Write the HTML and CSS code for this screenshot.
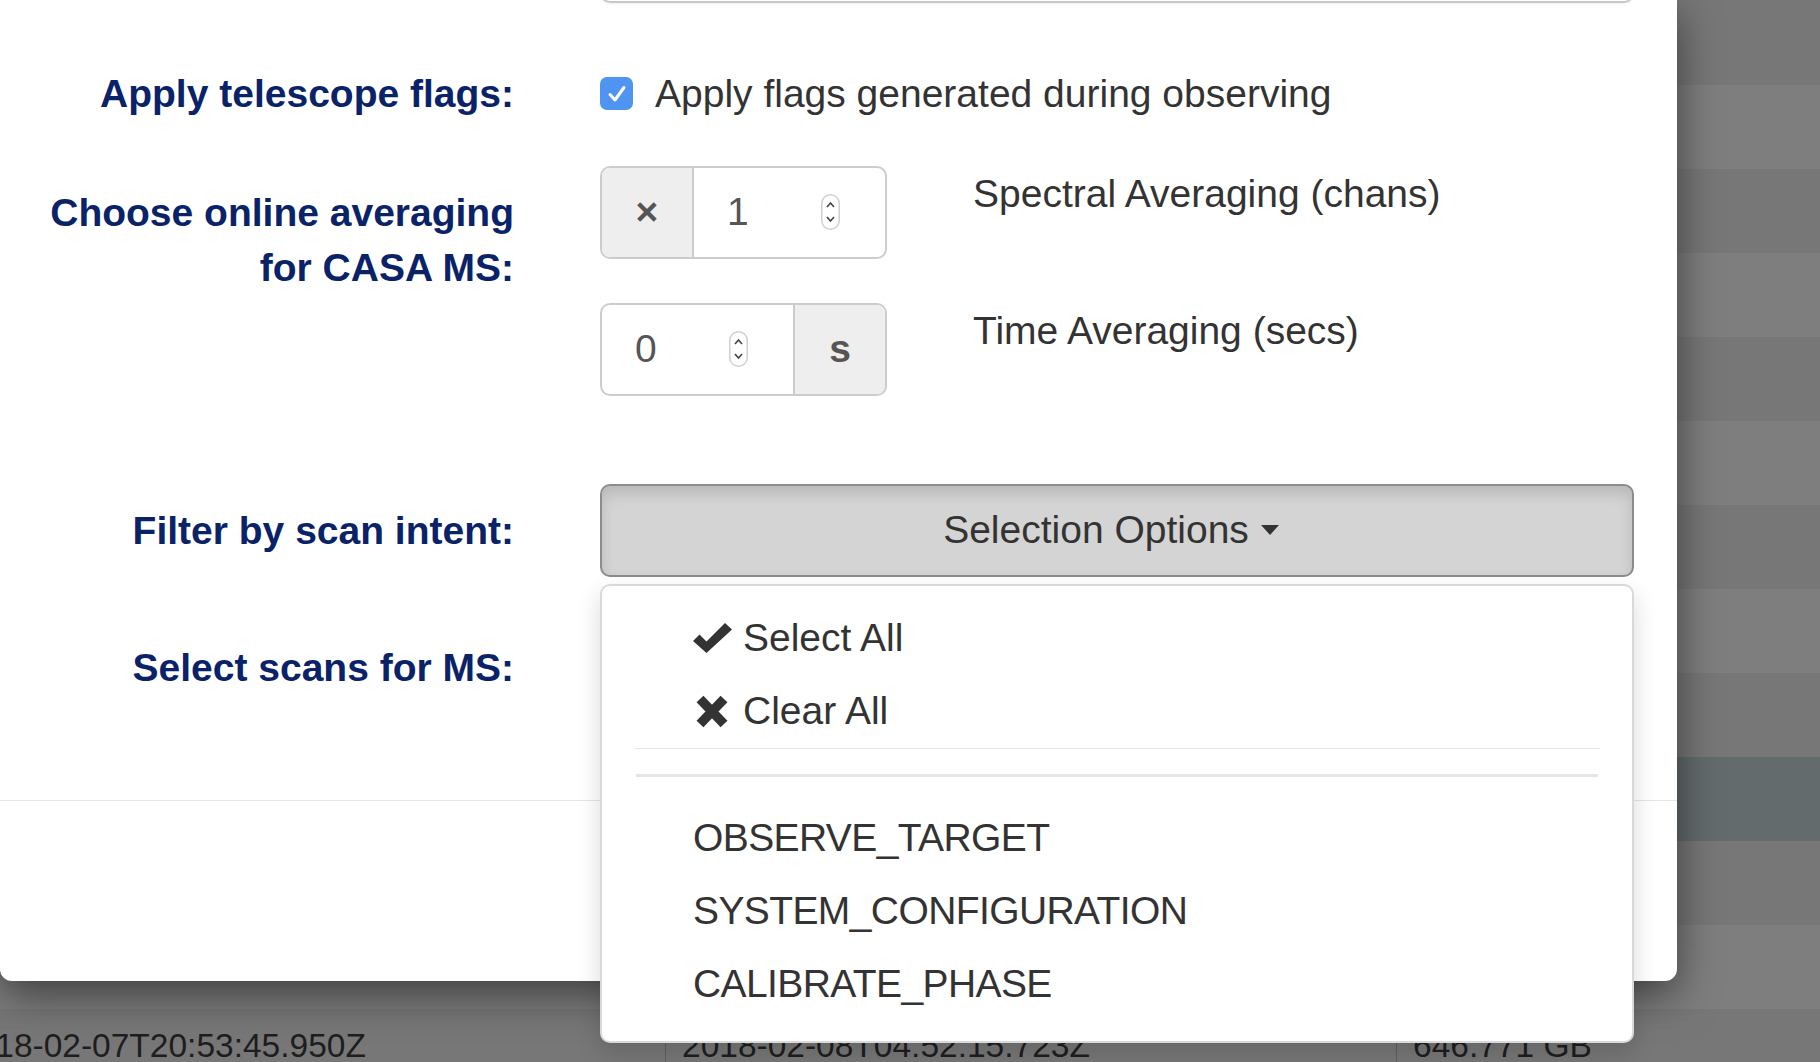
FILE: index.html
```html
<!DOCTYPE html>
<html lang="en">
<head>
<meta charset="utf-8">
<title>Export options</title>
<link rel="stylesheet" href="styles.css">
</head>
<body>
<div class="bg-table">
  <div class="bg-row first"></div>
  <div class="bg-row"></div>
  <div class="bg-row"></div>
  <div class="bg-row"></div>
  <div class="bg-row"></div>
  <div class="bg-row"></div>
  <div class="bg-row"></div>
  <div class="bg-row"></div>
  <div class="bg-row"></div>
  <div class="bg-row active"></div>
  <div class="bg-row"></div>
  <div class="bg-row"></div>
  <div class="bg-row data">
    <div class="cell">2018-02-07T20:53:45.950Z</div>
    <div class="cell">2018-02-08T04:52:15.723Z</div>
    <div class="cell">646.771 GB</div>
  </div>
</div>

<div class="modal">
  <div class="modal-body">
    <div class="form-group prev">
      <div></div>
      <div class="prev-input"></div>
    </div>

    <div class="form-group">
      <label class="control-label">Apply telescope flags:</label>
      <div class="checkbox">
        <span class="cb">
          <svg width="20" height="18" viewBox="0 0 20 18"><path d="M3 9.5 L8 15 L17 2.5" fill="none" stroke="#fff" stroke-width="3" stroke-linecap="round" stroke-linejoin="round"/></svg>
        </span>
        <span>Apply flags generated during observing</span>
      </div>
    </div>

    <div class="form-group">
      <label class="control-label">Choose online averaging<br>for CASA MS:</label>
      <div class="avg">
        <div class="avg-row">
          <div class="input-group">
            <span class="addon left">×</span>
            <span class="num">
              <span class="val">1</span>
              <svg class="spin" viewBox="0 0 19 36" width="19" height="36"><rect x="0.75" y="0.75" width="17.5" height="34.5" rx="8.75" fill="#fff" stroke="#cfcfcf" stroke-width="1.5"/><path d="M6 13 L9.5 9 L13 13" fill="none" stroke="#444" stroke-width="1.6"/><path d="M6 23 L9.5 27 L13 23" fill="none" stroke="#444" stroke-width="1.6"/></svg>
            </span>
          </div>
          <div class="avg-text">Spectral Averaging (chans)</div>
        </div>
        <div class="avg-row">
          <div class="input-group">
            <span class="num">
              <span class="val">0</span>
              <svg class="spin" viewBox="0 0 19 36" width="19" height="36"><rect x="0.75" y="0.75" width="17.5" height="34.5" rx="8.75" fill="#fff" stroke="#cfcfcf" stroke-width="1.5"/><path d="M6 13 L9.5 9 L13 13" fill="none" stroke="#444" stroke-width="1.6"/><path d="M6 23 L9.5 27 L13 23" fill="none" stroke="#444" stroke-width="1.6"/></svg>
            </span>
            <span class="addon right">s</span>
          </div>
          <div class="avg-text">Time Averaging (secs)</div>
        </div>
      </div>
    </div>

    <div class="form-group">
      <label class="control-label">Filter by scan intent:</label>
      <div class="btn-group">
        <button class="btn-select" type="button">Selection Options <span class="caret"></span></button>
        <ul class="dropdown-menu">
          <li class="menu-item">
            <span class="ico">
              <svg width="39" height="30" viewBox="0 0 39 30"><path d="M0 18 L6.5 11.5 L13.5 18.5 L32 0 L39 6.5 L13.5 30 Z" fill="#333"/></svg>
            </span>
            <span>Select All</span>
          </li>
          <li class="menu-item">
            <span class="ico">
              <svg width="39" height="33" viewBox="0 0 39 33"><path d="M7 4 L31 29 M31 4 L7 29" fill="none" stroke="#333" stroke-width="9.5"/></svg>
            </span>
            <span>Clear All</span>
          </li>
          <li class="sep-thin"></li>
          <li class="divider"></li>
          <li class="menu-item caps">OBSERVE_TARGET</li>
          <li class="menu-item caps">SYSTEM_CONFIGURATION</li>
          <li class="menu-item caps">CALIBRATE_PHASE</li>
        </ul>
      </div>
    </div>

    <div class="form-group">
      <label class="control-label">Select scans for MS:</label>
      <div></div>
    </div>
  </div>
  <div class="modal-footer"></div>
</div>
</body>
</html>
```

FILE: styles.css
```css
* {
  box-sizing: border-box;
}

html,
body {
  margin: 0;
  padding: 0;
}

body {
  width: 1820px;
  height: 1062px;
  overflow: hidden;
  position: relative;
  background: #777;
  font-family: "Liberation Sans", Arial, Helvetica, sans-serif;
  font-size: 39px;
  line-height: 1.4286;
  color: #333;
}

/* background table (behind the modal backdrop) */
.bg-row {
  height: 84px;
  background: #777777;
}

.bg-row:nth-child(even) {
  background: #7e7e7e;
}

.bg-row.first {
  height: 85px;
}

.bg-row.active {
  background: #636b6c;
}

.bg-row.data {
  display: grid;
  grid-template-columns: 665px 731px 1fr;
  font-size: 33.5px;
  color: #1e1e1e;
  white-space: nowrap;
}

.bg-row .cell {
  padding: 13px 16px 0;
  border-left: 1px solid rgba(0, 0, 0, 0.2);
}

.bg-row .cell:first-child {
  border-left: none;
  padding-left: 0;
  margin-left: -42px;
}

/* modal */
.modal {
  position: absolute;
  left: 0;
  top: 0;
  width: 1677px;
  height: 981px;
  background: #fff;
  border-radius: 0 0 12px 12px;
  box-shadow: 0 14px 42px rgba(0, 0, 0, 0.5);
  display: flex;
  flex-direction: column;
}

.modal-body {
  flex: 1;
  padding-right: 43px;
}

.modal-footer {
  height: 181px;
  border-top: 1px solid #e5e5e5;
}

.form-group {
  display: grid;
  grid-template-columns: 514px 1034px;
  column-gap: 86px;
  margin-bottom: 44px;
}

.prev-input {
  height: 14px;
  margin-top: -11px;
  border: 2px solid #c8c8c8;
  border-top: none;
  border-radius: 0 0 10px 10px;
  box-shadow: 0 1px 2px rgba(0, 0, 0, 0.08);
}

.control-label {
  text-align: right;
  font-weight: 700;
  color: #0a2368;
  padding-top: 19px;
}

.checkbox {
  padding-top: 19px;
  display: flex;
  align-items: center;
  gap: 22px;
}

.cb {
  width: 33px;
  height: 33px;
  border-radius: 7px;
  background: #4f94f0;
  display: flex;
  align-items: center;
  justify-content: center;
}

.avg-row {
  display: grid;
  grid-template-columns: 287px 1fr;
  column-gap: 86px;
  margin-bottom: 44px;
}

.input-group {
  display: flex;
  height: 93px;
  border: 2px solid #cccccc;
  border-radius: 10px;
  overflow: hidden;
}

.addon {
  width: 92px;
  background: #eeeeee;
  display: flex;
  align-items: center;
  justify-content: center;
  font-weight: 700;
  color: #555;
}

.addon.left {
  border-right: 2px solid #cccccc;
}

.addon.right {
  border-left: 2px solid #cccccc;
}

.num {
  flex: 1;
  display: flex;
  align-items: center;
  padding: 0 45px 0 33px;
  color: #555;
}

.num .val {
  flex: 1;
}

.spin {
  display: block;
}

/* dropdown */
.btn-group {
  position: relative;
}

.btn-select {
  width: 100%;
  height: 93px;
  border: 2px solid #8c8c8c;
  border-radius: 10px;
  background: #d4d4d4;
  box-shadow: inset 0 8px 14px rgba(0, 0, 0, 0.125);
  display: flex;
  align-items: center;
  justify-content: center;
  font: inherit;
  color: #333;
  padding: 0 12px 0 0;
}

.caret {
  width: 0;
  height: 0;
  border-left: 9px solid transparent;
  border-right: 9px solid transparent;
  border-top: 10px solid #333;
  margin-left: 12px;
}

.dropdown-menu {
  position: absolute;
  z-index: 10;
  top: calc(100% + 7px);
  left: 0;
  right: 0;
  margin: 0;
  padding: 16px 0 20px;
  list-style: none;
  background: #fff;
  border: 2px solid rgba(0, 0, 0, 0.15);
  border-radius: 10px;
  box-shadow: 0 10px 24px rgba(0, 0, 0, 0.15);
}

.menu-item {
  display: flex;
  align-items: center;
  height: 73px;
  padding: 8px 20px 8px 91px;
  line-height: 56px;
  color: #333;
}

.menu-item.caps {
  letter-spacing: -0.6px;
}

.ico {
  width: 39px;
  margin-right: 11px;
  display: flex;
  align-items: center;
}

.ico svg {
  display: block;
}

.sep-thin {
  height: 1px;
  margin: 0 32px;
  background: #e6e6e6;
}

.divider {
  height: 3px;
  margin: 25px 34px;
  background: #e5e5e5;
}
```
